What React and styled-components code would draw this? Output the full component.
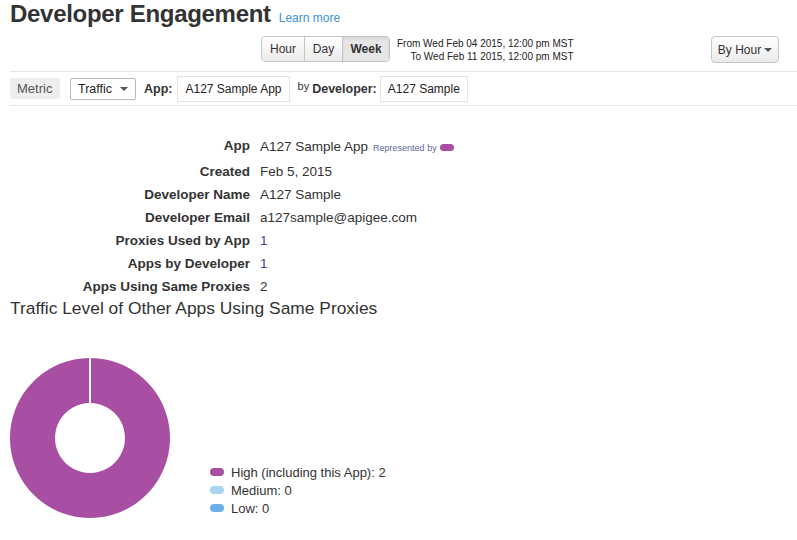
import React from "react";
import styled, { createGlobalStyle } from "styled-components";

const Global = createGlobalStyle`
  html, body { margin: 0; padding: 0; background: #fff; }
  body { font-family: "Liberation Sans", Arial, Helvetica, sans-serif; color: #333; }
`;

const Page = styled.div`
  width: 797px;
  height: 540px;
  overflow: hidden;
`;

const Header = styled.div`
  display: flex;
  align-items: baseline;
  padding: 0 0 0 10px;
  height: 30px;
`;

const Title = styled.h1`
  margin: 0;
  font-size: 24px;
  font-weight: bold;
  color: #333;
  letter-spacing: -0.3px;
  line-height: 28px;
`;

const LearnMore = styled.a`
  margin-left: 8px;
  font-size: 12px;
  color: #3a93d4;
  text-decoration: none;
`;

const Toolbar = styled.div`
  display: flex;
  align-items: center;
  height: 41px;
  margin-top: 1px;
  margin-left: 10px;
  padding: 0 18px 0 251px;
  border-bottom: 1px solid #e6e6e6;
  box-sizing: border-box;
`;

const BtnGroup = styled.div`
  display: flex;
  border: 1px solid #c4c4c4;
  border-radius: 4px;
  overflow: hidden;
  height: 26px;
  box-sizing: border-box;
  margin-top: -4px;
`;

const GroupBtn = styled.button`
  font-family: inherit;
  font-size: 12px;
  font-weight: ${(p) => (p.$active ? "bold" : "normal")};
  color: #333;
  border: none;
  border-left: ${(p) => (p.$first ? "none" : "1px solid #c4c4c4")};
  background: ${(p) => (p.$active ? "#e6e6e6" : "linear-gradient(#fff, #ebebeb)")};
  box-shadow: ${(p) => (p.$active ? "inset 0 2px 3px rgba(0,0,0,0.08)" : "none")};
  padding: 0;
  width: ${(p) => p.$w}px;
  height: 100%;
`;

const Dates = styled.div`
  display: flex;
  flex-direction: column;
  align-items: flex-end;
  font-size: 10px;
  line-height: 13px;
  margin-left: 7px;
  margin-top: -2px;
  color: #222;
`;

const Spacer = styled.div`
  flex: 1;
`;

const DropBtn = styled.button`
  font-family: inherit;
  font-size: 12px;
  color: #333;
  height: 27px;
  width: 68px;
  border: 1px solid #c4c4c4;
  border-radius: 4px;
  background: linear-gradient(#fff, #ebebeb);
  padding: 0;
  margin-top: -3px;
  display: flex;
  align-items: center;
  justify-content: center;
  gap: 3px;
`;

const Caret = styled.span`
  display: inline-block;
  width: 0;
  height: 0;
  border-left: 4px solid transparent;
  border-right: 4px solid transparent;
  border-top: 4px solid #555;
`;

const FilterRow = styled.div`
  display: flex;
  align-items: center;
  height: 33px;
  margin-left: 10px;
  border-bottom: 1px solid #e6e6e6;
  font-size: 12px;
`;

const MetricLabel = styled.div`
  background: #eee;
  color: #555;
  height: 21px;
  line-height: 21px;
  padding: 0 7px;
  width: 50px;
  font-size: 13px;
  box-sizing: border-box;
  border-radius: 2px;
`;

const Select = styled.div`
  display: flex;
  align-items: center;
  justify-content: space-between;
  margin-left: 10px;
  width: 66px;
  height: 22px;
  box-sizing: border-box;
  border: 1px solid #bbb;
  border-radius: 2px;
  padding: 0 7px 0 7px;
  font-size: 12.5px;
  color: #222;
`;

const FieldLabel = styled.span`
  font-weight: bold;
  font-size: 12.5px;
  color: #333;
  margin-left: ${(p) => p.$ml || 8}px;
`;

const Small = styled.span`
  font-size: 11px;
  margin-left: 8px;
  position: relative;
  top: -3px;
  color: #333;
`;

const Input = styled.div`
  margin-left: ${(p) => p.$ml || 6}px;
  height: 24px;
  line-height: 24px;
  border: 1px solid #e3e3e3;
  padding: 0 7px;
  color: #222;
`;

const Details = styled.div`
  display: grid;
  grid-template-columns: 250px auto;
  column-gap: 10px;
  row-gap: 0;
  margin-top: 28px;
  font-size: 13.5px;
`;

const DLabel = styled.div`
  text-align: right;
  font-weight: bold;
  color: #333;
  line-height: ${(p) => (p.$tall ? 24 : 23)}px;
`;

const DValue = styled.div`
  color: ${(p) => p.$c || "#333"};
  line-height: ${(p) => (p.$tall ? 24 : 23)}px;
  display: flex;
  align-items: center;
`;

const Rep = styled.span`
  font-size: 9px;
  color: #5a6aa0;
  margin-left: 5px;
  margin-top: 2px;
`;

const Pill = styled.span`
  display: inline-block;
  width: ${(p) => p.$w || 14}px;
  height: ${(p) => p.$h || 8}px;
  border-radius: 4px;
  background: ${(p) => p.$c};
  margin-left: ${(p) => p.$ml || 0}px;
`;

const ChartTitle = styled.h2`
  margin: -1px 0 0 10px;
  font-size: 17.4px;
  font-weight: normal;
  color: #333;
  line-height: 22px;
`;

const ChartArea = styled.div`
  display: flex;
  align-items: flex-end;
  margin-top: 39px;
  padding-left: 10px;
`;

const Legend = styled.div`
  display: flex;
  flex-direction: column;
  margin-left: 40px;
  margin-bottom: 2px;
  font-size: 13px;
`;

const LegendItem = styled.div`
  display: flex;
  align-items: center;
  gap: 7px;
  height: 18px;
  color: #333;
`;

const Donut = () => {
  const cx = 80, cy = 80, R = 80, r = 35;
  return (
    <svg width="160" height="161" viewBox="0 0 160 161">
      <path
        d={`M ${cx} ${cy - R} A ${R} ${R} 0 1 1 ${cx - 0.01} ${cy - R} L ${cx - 0.01} ${cy - r} A ${r} ${r} 0 1 0 ${cx} ${cy - r} Z`}
        fill="#a94fa3"
        fillRule="evenodd"
      />
      <line x1={cx} y1={cy - R} x2={cx} y2={cy - r} stroke="#fff" strokeWidth="2" />
    </svg>
  );
};

const rows = [
  ["App", "A127 Sample App", null, true],
  ["Created", "Feb 5, 2015"],
  ["Developer Name", "A127 Sample"],
  ["Developer Email", "a127sample@apigee.com"],
  ["Proxies Used by App", "1", "#4b3e8e"],
  ["Apps by Developer", "1", "#4b3e8e"],
  ["Apps Using Same Proxies", "2"],
];

export default function App() {
  return (
    <Page>
      <Global />
      <Header>
        <Title>Developer Engagement</Title>
        <LearnMore href="#">Learn more</LearnMore>
      </Header>
      <Toolbar>
        <BtnGroup>
          <GroupBtn $first $w={42}>Hour</GroupBtn>
          <GroupBtn $w={38}>Day</GroupBtn>
          <GroupBtn $active $w={47}>Week</GroupBtn>
        </BtnGroup>
        <Dates>
          <span>From Wed Feb 04 2015, 12:00 pm MST</span>
          <span>To Wed Feb 11 2015, 12:00 pm MST</span>
        </Dates>
        <Spacer />
        <DropBtn>
          By Hour <Caret />
        </DropBtn>
      </Toolbar>
      <FilterRow>
        <MetricLabel>Metric</MetricLabel>
        <Select>
          Traffic <Caret />
        </Select>
        <FieldLabel $ml={8}>App:</FieldLabel>
        <Input $ml={5}>A127 Sample App</Input>
        <Small>by</Small>
        <FieldLabel $ml={3}>Developer:</FieldLabel>
        <Input $ml={3}>A127 Sample</Input>
      </FilterRow>
      <Details>
        {rows.map(([l, v, c, rep]) => (
          <React.Fragment key={l}>
            <DLabel $tall={rep}>{l}</DLabel>
            <DValue $c={c} $tall={rep}>
              {v}
              {rep && (
                <>
                  <Rep>Represented by</Rep>
                  <Pill $c="#a94fa3" $w={14} $h={7} $ml={3} />
                </>
              )}
            </DValue>
          </React.Fragment>
        ))}
      </Details>
      <ChartTitle>Traffic Level of Other Apps Using Same Proxies</ChartTitle>
      <ChartArea>
        <Donut />
        <Legend>
          <LegendItem>
            <Pill $c="#a94fa3" />
            High (including this App): 2
          </LegendItem>
          <LegendItem>
            <Pill $c="#a8d5ee" />
            Medium: 0
          </LegendItem>
          <LegendItem>
            <Pill $c="#6aaeea" />
            Low: 0
          </LegendItem>
        </Legend>
      </ChartArea>
    </Page>
  );
}
